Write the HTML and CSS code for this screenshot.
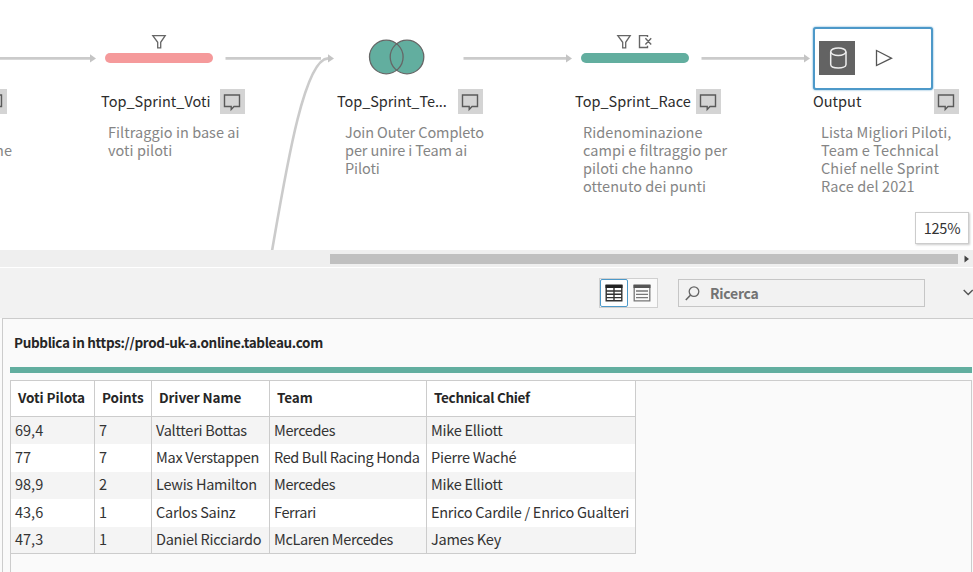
FILE: index.html
```
<!DOCTYPE html>
<html lang="it">
<head>
<meta charset="utf-8">
<title>Flusso Sprint Race</title>
<link rel="stylesheet" href="styles.css">
</head>
<body>
<svg class="symbols" aria-hidden="true">
  <symbol id="comment" viewBox="0 0 25 25"><path d="M4.5 6H19.5V17.5H14L11.2 20.5V17.5H4.5Z" fill="none" stroke="#5a5a5a" stroke-width="1.4"/></symbol>
  <symbol id="funnel" viewBox="0 0 16 16"><path d="M1.8 1.6H14.2L9.7 8.3V13.8H6.7V8.3Z" fill="none" stroke="#666" stroke-width="1.3"/></symbol>
</svg>

<main class="app">
  <section class="canvas">
    <svg class="links" width="973" height="250" viewBox="0 0 973 250">
      <g fill="none" stroke="#cbcbcb" stroke-width="2.6">
        <path d="M0 58.4H91"/>
        <path d="M225.5 58.4H321"/>
        <path d="M463.5 58.4H567"/>
        <path d="M701.5 58.4H805"/>
        <path d="M272 251C286 170 304 59 328 58.4"/>
      </g>
      <g fill="#c4c4c4">
        <path d="M90 54.3L96 58.4L90 62.5Z"/>
        <path d="M328 54.3L334 58.4L328 62.5Z"/>
        <path d="M566 54.3L572 58.4L566 62.5Z"/>
        <path d="M804 54.3L810 58.4L804 62.5Z"/>
      </g>
    </svg>

    <article class="node node-prev">
      <div class="label"><span class="name"></span><span class="note"><svg><use href="#comment"/></svg></span></div>
      <p class="desc right">ne</p>
    </article>

    <article class="node node-voti">
      <div class="changes"><svg><use href="#funnel"/></svg></div>
      <div class="bar red"></div>
      <div class="label"><span class="name">Top_Sprint_Voti</span><span class="note"><svg><use href="#comment"/></svg></span></div>
      <p class="desc">Filtraggio in base ai<br>voti piloti</p>
    </article>

    <article class="node node-join">
      <svg class="venn" viewBox="0 0 58 38"><g fill="#62ae9f"><circle cx="19.3" cy="19" r="16.8"/><circle cx="40" cy="19" r="16.8"/></g><g fill="none" stroke="#666" stroke-width="1.3"><circle cx="19.3" cy="19" r="16.8"/><circle cx="40" cy="19" r="16.8"/></g></svg>
      <div class="label"><span class="name">Top_Sprint_Te...</span><span class="note"><svg><use href="#comment"/></svg></span></div>
      <p class="desc">Join Outer Completo<br>per unire i Team ai<br>Piloti</p>
    </article>

    <article class="node node-race">
      <div class="changes"><svg><use href="#funnel"/></svg><svg viewBox="0 0 16 16"><path d="M10.5 3V1.6H2.5V13.5H10.5V11.8M8.4 4.2L14.2 10.4M14.2 4.2L8.4 10.4" fill="none" stroke="#666" stroke-width="1.4"/></svg></div>
      <div class="bar green"></div>
      <div class="label"><span class="name">Top_Sprint_Race</span><span class="note"><svg><use href="#comment"/></svg></span></div>
      <p class="desc">Ridenominazione<br>campi e filtraggio per<br>piloti che hanno<br>ottenuto dei punti</p>
    </article>

    <article class="node node-output">
      <div class="output">
        <svg class="database" viewBox="0 0 36 34"><path d="M11.7 10.7V23.5C11.7 28.2 27 28.2 27 23.5V10.7" fill="none" stroke="#eee" stroke-width="1.5"/><ellipse cx="19.3" cy="10.7" rx="7.6" ry="3.8" fill="none" stroke="#eee" stroke-width="1.5"/></svg>
        <svg class="play" viewBox="0 0 18 18"><path d="M1.5 1.5L16.5 9.2L1.5 16.5Z" fill="none" stroke="#555" stroke-width="1.3"/></svg>
      </div>
      <div class="label"><span class="name">Output</span><span class="note"><svg><use href="#comment"/></svg></span></div>
      <p class="desc">Lista Migliori Piloti,<br>Team e Technical<br>Chief nelle Sprint<br>Race del 2021</p>
    </article>
    <div class="zoom">125%</div>
  </section>

  <div class="scrollbar"><div class="thumb"></div><svg viewBox="0 0 6 8"><path d="M0.5 0.5L5 4L0.5 7.5Z" fill="#444"/></svg></div>

  <div class="toolbar">
    <div class="views">
      <span class="view active"><svg viewBox="0 0 18 18"><path d="M1.2 1V16.8H16.8V1M1 7H17M1 10.3H17M1 13.6H17M9 4V17" fill="none" stroke="#333" stroke-width="1.4"/><path d="M.5.5H17.5V4H.5Z" fill="#222"/></svg></span>
      <span class="view"><svg viewBox="0 0 18 18"><path d="M1.2 1V16.8H16.8V1M3 7H15M3 10.3H15M3 13.6H15" fill="none" stroke="#777" stroke-width="1.3"/><path d="M.5.5H17.5V4H.5Z" fill="#555"/></svg></span>
    </div>
    <div class="search"><svg viewBox="0 0 15 15"><circle cx="9" cy="5.6" r="4.8" fill="none" stroke="#666" stroke-width="1.3"/><path d="M5.6 9L.8 14" stroke="#666" stroke-width="1.6"/></svg><span>Ricerca</span></div>
    <svg class="chevron" viewBox="0 0 10 8"><path d="M.7 1L5.2 5.5L9.7 1" fill="none" stroke="#555" stroke-width="1.4"/></svg>
  </div>

  <section class="preview">
    <h1>Pubblica in https://prod-uk-a.online.tableau.com</h1>
    <div class="rule"></div>
    <div class="grid">
      <table>
        <colgroup><col class="c1"><col class="c2"><col class="c3"><col class="c4"><col class="c5"></colgroup>
        <thead><tr><th>Voti Pilota</th><th>Points</th><th>Driver Name</th><th>Team</th><th>Technical Chief</th></tr></thead>
        <tbody>
          <tr><td>69,4</td><td>7</td><td>Valtteri Bottas</td><td>Mercedes</td><td>Mike Elliott</td></tr>
          <tr><td>77</td><td>7</td><td>Max Verstappen</td><td>Red Bull Racing Honda</td><td>Pierre Waché</td></tr>
          <tr><td>98,9</td><td>2</td><td>Lewis Hamilton</td><td>Mercedes</td><td>Mike Elliott</td></tr>
          <tr><td>43,6</td><td>1</td><td>Carlos Sainz</td><td>Ferrari</td><td>Enrico Cardile / Enrico Gualteri</td></tr>
          <tr><td>47,3</td><td>1</td><td>Daniel Ricciardo</td><td>McLaren Mercedes</td><td>James Key</td></tr>
        </tbody>
      </table>
    </div>
  </section>
</main>
</body>
</html>
```
FILE: styles.css
```
* { box-sizing: border-box; }
body { margin: 0; background: #fafafa; color: #333; font-family: "Noto Sans CJK SC", "Noto Sans", sans-serif; font-size: 14px; }
svg { display: block; }
.symbols { position: absolute; width: 0; height: 0; }
.app { display: flex; flex-direction: column; width: 973px; height: 572px; overflow: hidden; }

.canvas { position: relative; flex: none; height: 250px; overflow: hidden; background: #fff; }
.links { position: absolute; left: 0; top: 0; }
.node { position: absolute; top: 0; width: 144px; }
.node-prev { left: -137px; }
.node-voti { left: 101px; }
.node-join { left: 337px; }
.node-race { left: 575px; }
.node-output { left: 813px; }
.changes { position: absolute; top: 34px; left: 4px; width: 108px; display: flex; justify-content: center; gap: 5px; }
.changes svg { width: 16px; height: 16px; }
.bar { position: absolute; top: 53px; left: 4px; width: 107.5px; height: 10px; border-radius: 5px; }
.node-race .bar { left: 6px; }
.node-race .changes { left: 5px; }
.red { background: #f59a9b; }
.green { background: #62ae9f; }
.venn { position: absolute; left: 30px; top: 38px; width: 58px; height: 38px; }
.label { display: flex; align-items: center; justify-content: space-between; margin-top: 89px; height: 25px; width: 144px; }
.node-join .label, .node-race .label, .node-output .label { width: 146px; }
.name { margin-top: -1px; font-size: 14.5px; line-height: 24px; color: #2c2c2c; letter-spacing: .02px; white-space: nowrap; }
.node-join .name { letter-spacing: -.07px; }
.note { width: 25px; height: 25px; background: #d4d4d4; }
.note svg { width: 25px; height: 25px; }
.desc { margin: 8.6px 0 0 7px; color: #858585; font-size: 14.5px; line-height: 18.2px; letter-spacing: .05px; white-space: nowrap; }
.node-join .desc, .node-race .desc, .node-output .desc { margin-left: 8px; }
.node-join .desc { letter-spacing: -.1px; }
.node-output .desc { letter-spacing: .12px; }
.node-prev .desc { margin-top: 27px; }
.right { text-align: right; margin-right: -5px; }
.output { position: absolute; left: 0; top: 27px; width: 120px; height: 62.5px; border: 2px solid #4d99c9; border-radius: 3px; background: #fff; box-shadow: 0 0 2px #4d99c9; display: flex; align-items: center; padding: 0 4px; }
.database { width: 36px; height: 34px; background: #636363; }
.play { width: 18px; height: 18px; margin-left: 20px; }
.zoom { position: absolute; left: 915px; top: 212px; width: 54px; height: 32px; border: 1px solid #ccc; background: #fff; box-shadow: 1px 1px 2px #ccc; line-height: 29px; text-align: center; font-size: 14.5px; letter-spacing: -.2px; }

.scrollbar { flex: none; display: flex; align-items: center; height: 18px; padding-left: 330px; background: #efefef; border-bottom: 1px solid #fff; }
.thumb { width: 628px; height: 10px; background: #c0c0c0; }
.scrollbar svg { width: 6px; height: 8px; margin-left: 6px; }

.toolbar { flex: none; display: flex; align-items: center; height: 50px; padding-left: 599px; background: #f2f2f2; }
.views { flex: none; display: flex; width: 59px; height: 30px; border: 1px solid #d0d0d0; background: #fafafa; }
.view { display: flex; align-items: center; justify-content: center; width: 28px; height: 28px; }
.view svg { width: 18px; height: 18px; }
.active { border: 1px solid #4d99c9; border-radius: 2px; background: #fff; }
.search { flex: none; display: flex; align-items: center; width: 247px; height: 28px; margin-left: 20px; border: 1px solid #c6c6c6; padding-left: 6px; color: #737373; font-weight: 700; line-height: 26px; letter-spacing: -.25px; }
.search svg { width: 15px; height: 15px; margin-right: 10px; }
.chevron { flex: none; width: 10px; height: 8px; margin-left: 38px; }

.preview { display: flex; flex-direction: column; flex: 1; margin-left: 2px; border-top: 1px solid #ccc; border-left: 1px solid #ccc; background: #fafafa; }
h1 { margin: 0; padding: 0 0 0 11px; height: 48px; line-height: 46px; font-size: 13.5px; font-weight: 700; letter-spacing: -.33px; color: #262626; }
.rule { height: 6px; margin: 0 1px 0 7px; background: #62ae9f; }
.grid { flex: 1; margin: 7px 1px 0 7px; border: 1px solid #ccc; border-bottom: 0; }
table { table-layout: fixed; border-collapse: separate; border-spacing: 0; width: 625px; background: #fff; }
.c1 { width: 84px; } .c2 { width: 57px; } .c3 { width: 118px; } .c4 { width: 157px; } .c5 { width: 209px; }
th, td { padding: 0; text-align: left; white-space: nowrap; border-right: 1px solid #ccc; }
th { height: 36px; padding: 0 0 4px 7px; border-bottom: 1px solid #ccc; font-size: 13.5px; font-weight: 700; line-height: 30px; letter-spacing: -.08px; color: #262626; }
th:last-child { letter-spacing: -.3px; }
td { height: 27.4px; padding: 0 0 2px 4px; line-height: 24px; font-size: 14.5px; letter-spacing: -.26px; }
td:first-child { letter-spacing: 0; }
td:nth-child(4) { letter-spacing: -.37px; }
tbody tr:nth-child(odd) { background: #f4f4f4; }
tbody tr:last-child td { border-bottom: 1px solid #ccc; }
```
